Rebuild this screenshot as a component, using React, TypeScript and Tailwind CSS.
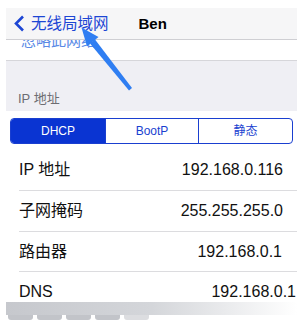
const font = { fontFamily: '"Liberation Sans", "Noto Sans CJK SC", sans-serif' };

const rows = [
  { label: 'IP 地址', value: '192.168.0.116', h: 'h-[41px]', pr: 'pr-[14px]' },
  { label: '子网掩码', value: '255.255.255.0', h: 'h-[41px]', pr: 'pr-[14px]' },
  { label: '路由器', value: '192.168.0.1', h: 'h-[40px]', pr: 'pr-[15px]' },
  { label: 'DNS', value: '192.168.0.1', h: 'h-[30px]', pr: 'pr-[1px]' },
];

// blue annotation arrow pointing at the back button
const Arrow = () => (
  <svg className="absolute left-0 top-0 pointer-events-none" width="300" height="329" viewBox="0 0 300 329">
    <polygon points="81.5,27.5 98.5,37 87,46.5" fill="#2f7ef2" />
    <polygon points="95,39.5 90,43.5 129,90.5 132,88" fill="#2f7ef2" />
  </svg>
);

export default function App() {
  return (
    <div className="relative w-[300px] h-[329px] bg-white overflow-hidden" style={font}>
      <div className="pt-[8px] pl-[6px] pr-[3px]">
        {/* nav bar */}
        <div className="h-[32px] bg-[#f6f6f7] border-b border-[#cfcfd3] flex items-center">
          <svg className="ml-[7px]" width="12" height="17" viewBox="0 0 12 17">
            <polyline points="10,1.5 3,8.5 10,15.5" fill="none" stroke="#1d46d4" strokeWidth="2.6" />
          </svg>
          <span className="ml-[6px] text-[15.5px] text-[#1d46d4] leading-none">无线局域网</span>
          <span className="ml-[30px] text-[15px] font-bold text-black leading-none">Ben</span>
        </div>

        {/* clipped row */}
        <div className="h-[21px] overflow-hidden border-b border-[#d6d6da] bg-white">
          <div className="-mt-[7px] ml-[15px] text-[15px] text-[#5a8ae6] leading-none">忽略此网络</div>
        </div>

        {/* section header */}
        <div className="h-[50px] bg-[#efeff4] flex items-end pb-[6px]">
          <span className="ml-[12px] text-[13px] text-[#6d6d72] leading-none">IP 地址</span>
        </div>

        {/* segmented control */}
        <div className="bg-white pt-[7px] px-[4px]">
          <div className="h-[26px] flex border border-[#1a3fd0] rounded-[4px] overflow-hidden text-[12px] leading-none">
            <div className="w-[94px] bg-[#0a34d2] text-white flex items-center justify-center">DHCP</div>
            <div className="w-[94px] border-x border-[#1a3fd0] text-[#1a3fd0] flex items-center justify-center">BootP</div>
            <div className="flex-1 text-[#1a3fd0] flex items-center justify-center">静态</div>
          </div>
        </div>

        {/* rows */}
        <div className="bg-white pt-[6px]">
          {rows.map((r, i) => (
            <div key={r.label} className={`${r.h} ml-[13px] flex items-center justify-between text-[16px] text-[#111] ${r.pr} ${i < 3 ? 'border-b border-[#dcdcdf]' : ''}`}>
              <span className={i === 3 ? 'pt-[10px]' : ''}>{r.label}</span>
              <span className={i === 3 ? 'pt-[10px]' : ''}>{r.value}</span>
            </div>
          ))}
        </div>

        {/* bottom toolbar remnants */}
        <div className="h-[13px] bg-linear-to-r from-[#c6c8cd] via-[#d4d6da] to-white" />
        <div className="flex gap-[4px] pl-[2px]">
          {[0, 1, 2, 3, 4].map((k) => (
            <div key={k} className={`w-[25px] h-[5px] rounded-b-[3px] ${k < 4 ? 'bg-[#c2c4c9]' : 'bg-[#dcdde0]'}`} />
          ))}
        </div>
      </div>
      <Arrow />
    </div>
  );
}
